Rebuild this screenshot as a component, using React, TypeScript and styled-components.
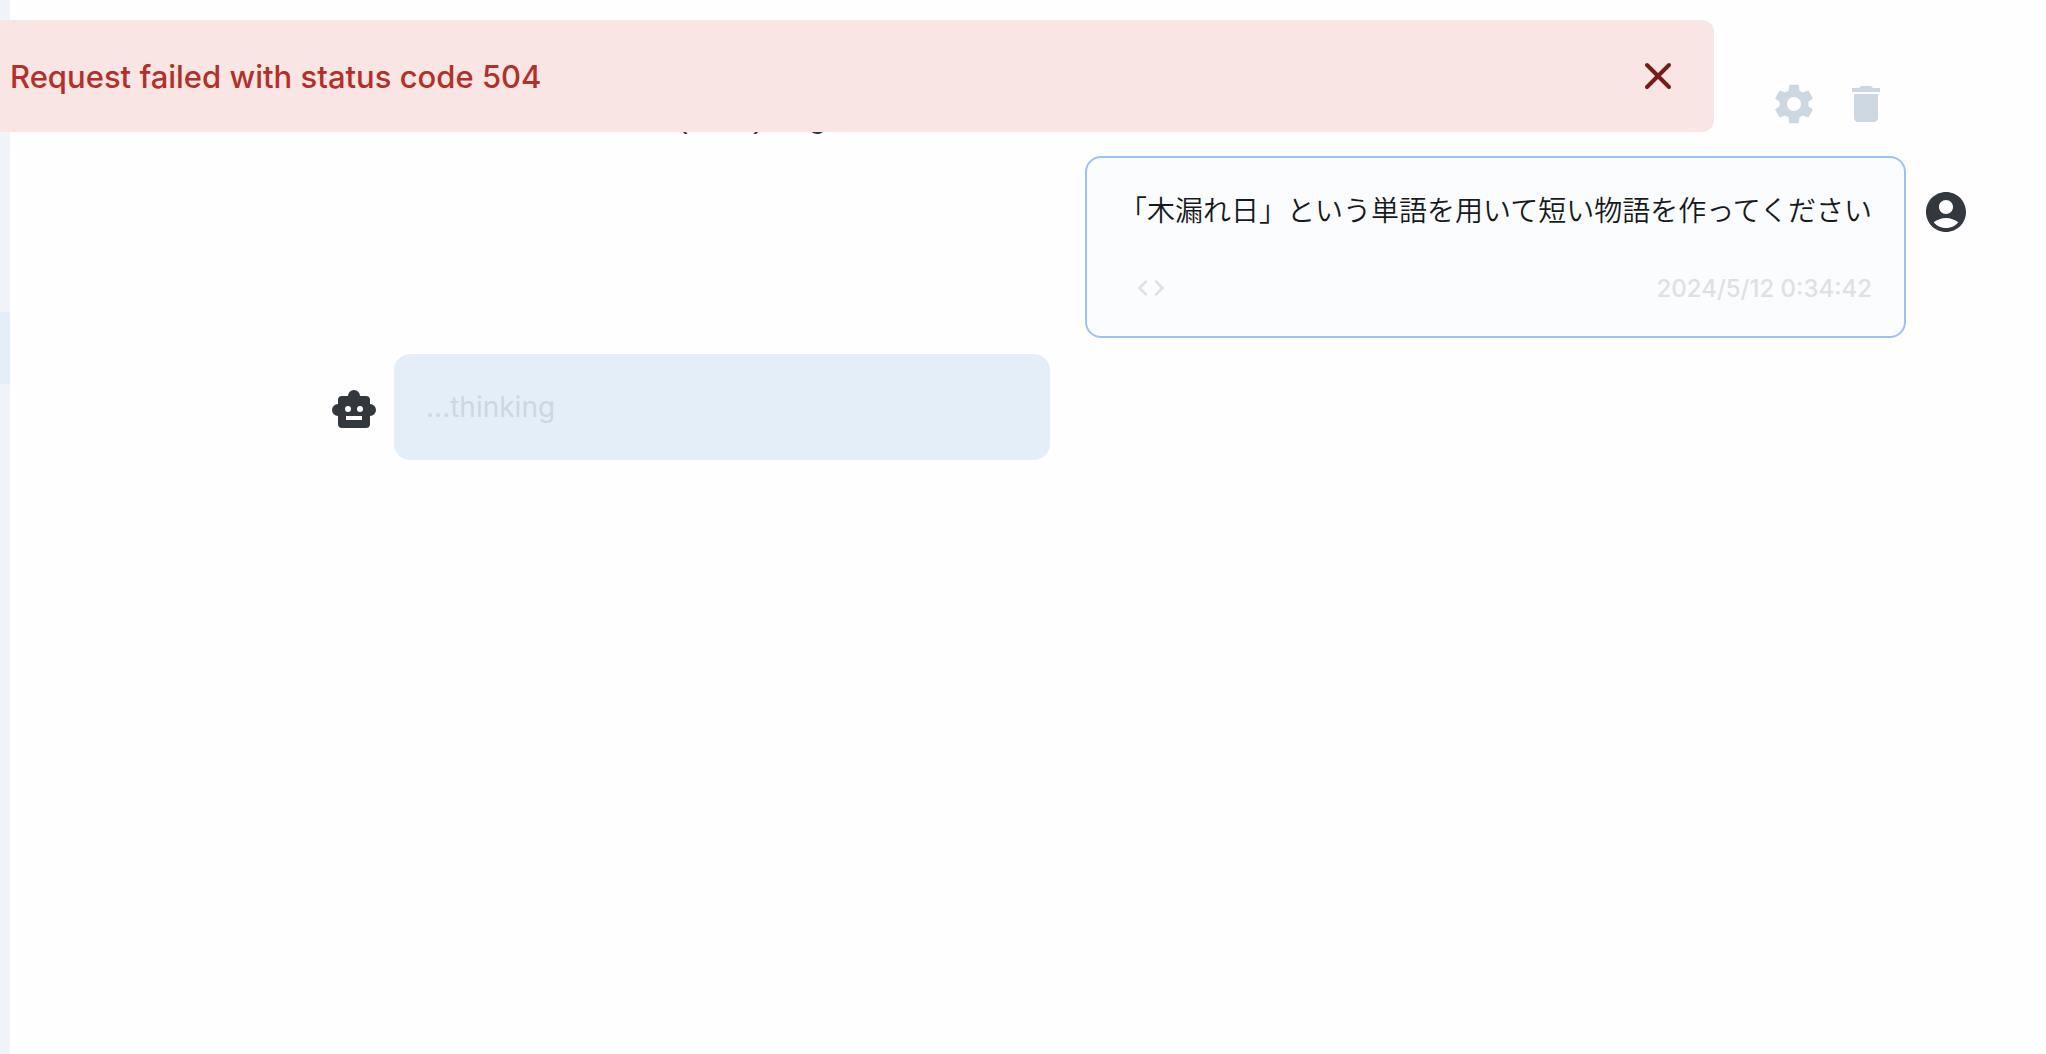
import React from "react";
import styled, { createGlobalStyle } from "styled-components";

const GlobalStyle = createGlobalStyle`
  * { box-sizing: border-box; }
  body {
    margin: 0;
    background: #fefefe;
    color: #1b1c1e;
    font-family: Inter, "Noto Sans CJK JP", sans-serif;
  }
`;

const Page = styled.div`
  display: flex;
  min-height: 100vh;
`;

const Sidebar = styled.nav`
  width: 10px;
  flex-shrink: 0;
  padding-top: 312px;
  background: #f0f4f8;
`;

const ActiveItem = styled.a`
  display: block;
  height: 72px;
  background: #e4eef9;
`;

const Main = styled.main`
  flex: 1;
  min-width: 0;
  display: flex;
  flex-direction: column;
  padding: 80px 76px 0 320px;
`;

const Header = styled.header`
  display: flex;
  align-items: center;
  justify-content: space-between;
  height: 48px;
  padding-right: 80px;
`;

const Title = styled.h1`
  margin: 0;
  padding: 24px 0 0 290px;
  font-family: "Liberation Sans", sans-serif;
  font-size: 32px;
  line-height: 48px;
  font-weight: 400;
  color: #32383e;
`;

const Tools = styled.div`
  display: flex;
  gap: 24px;
`;

const IconButton = styled.button<{ $color: string }>`
  display: flex;
  padding: 0;
  border: 0;
  background: none;
  color: ${(p) => p.$color};
  cursor: pointer;
`;

const Messages = styled.section`
  display: flex;
  flex-direction: column;
  gap: 16px;
  padding-top: 28px;
`;

const Row = styled.article<{ $own?: boolean }>`
  display: flex;
  gap: 16px;
  justify-content: ${(p) => (p.$own ? "flex-end" : "flex-start")};
`;

const Avatar = styled.div`
  display: flex;
  height: 48px;
  margin-top: 32px;
  color: #32383e;
`;

const UserBubble = styled.div`
  padding: 32px 32px 24px;
  border: 2px solid #9fc1ef;
  border-radius: 16px;
  background: #fbfcfe;
`;

const BotBubble = styled.div`
  width: 656px;
  padding: 32px;
  border-radius: 16px;
  background: #e4eef9;
`;

const MessageText = styled.p<{ $muted?: boolean }>`
  margin: 0;
  font-size: 28px;
  line-height: 42px;
  font-weight: ${(p) => (p.$muted ? 400 : 350)};
  color: ${(p) => (p.$muted ? "#cdd7e1" : "#171a1c")};
`;

const Meta = styled.footer`
  display: flex;
  align-items: center;
  justify-content: space-between;
  height: 48px;
  margin-top: 32px;
  padding-left: 16px;
`;

const Time = styled.time`
  padding-top: 2px;
  font-size: 24px;
  line-height: 36px;
  font-weight: 500;
  color: #dfe0e2;
`;

const Alert = styled.div`
  position: fixed;
  top: 20px;
  left: 0;
  right: 332px;
  display: flex;
  align-items: center;
  justify-content: space-between;
  height: 112px;
  padding: 0 32px 0 10px;
  border-radius: 0 12px 12px 0;
  background: #f9e5e3;
  color: #b3302a;
  font-size: 31px;
  line-height: 48px;
  font-weight: 500;
`;

const AlertText = styled.span`
  padding-top: 2px;
`;

const Icon = ({ d, size = 48 }: { d: string; size?: number }) => (
  <svg width={size} height={size} viewBox="0 0 24 24" fill="currentColor" fillRule="evenodd" aria-hidden="true">
    <path d={d} />
  </svg>
);

const GEAR =
  "M19.14 12.94c.04-.3.06-.61.06-.94 0-.32-.02-.64-.07-.94l2.03-1.58c.18-.14.23-.41.12-.61l-1.92-3.32c-.12-.22-.37-.29-.59-.22l-2.39.96c-.5-.38-1.03-.7-1.62-.94l-.36-2.54c-.04-.24-.24-.41-.48-.41h-3.84c-.24 0-.43.17-.47.41l-.36 2.54c-.59.24-1.13.57-1.62.94l-2.39-.96c-.22-.08-.47 0-.59.22L2.74 8.87c-.12.21-.08.47.12.61l2.03 1.58c-.05.3-.09.63-.09.94s.02.64.07.94l-2.03 1.58c-.18.14-.23.41-.12.61l1.92 3.32c.12.22.37.29.59.22l2.39-.96c.5.38 1.03.7 1.62.94l.36 2.54c.05.24.24.41.48.41h3.84c.24 0 .44-.17.47-.41l.36-2.54c.59-.24 1.13-.56 1.62-.94l2.39.96c.22.08.47 0 .59-.22l1.92-3.32c.12-.22.07-.47-.12-.61l-2.01-1.58zM12 15.5c-1.93 0-3.5-1.57-3.5-3.5s1.57-3.5 3.5-3.5 3.5 1.57 3.5 3.5-1.57 3.5-3.5 3.5z";
const TRASH =
  "M6 19c0 1.1.9 2 2 2h8c1.1 0 2-.9 2-2V7H6v12zM19 4h-3.5l-.71-.71c-.18-.18-.44-.29-.7-.29H9.91c-.26 0-.52.11-.7.29L8.500 4H5v2h14V4z";
const USER =
  "M12 2C6.48 2 2 6.48 2 12s4.48 10 10 10 10-4.48 10-10S17.52 2 12 2zm0 4c1.93 0 3.5 1.57 3.5 3.5S13.930 13 12 13s-3.500-1.570-3.500-3.500S10.070 6 12 6zm0 14c-2.030 0-4.430-.820-6.140-2.880C7.550 15.800 9.680 15 12 15s4.450.800 6.140 2.120C16.430 19.180 14.030 20 12 20z";
const BOT =
  "M20 9a3 3 0 0 1 0 6v4a2 2 0 0 1-2 2H6a2 2 0 0 1-2-2v-4a3 3 0 0 1 0-6V7a2 2 0 0 1 2-2h3a3 3 0 0 1 6 0h3a2 2 0 0 1 2 2zM9 10a1.500 1.500 0 1 0 0 3 1.500 1.500 0 0 0 0-3zM15 10a1.500 1.500 0 1 0 0 3 1.500 1.500 0 0 0 0-3zM8 15v2h8v-2z";
const CODE =
  "M9.400 16.600 4.800 12l4.600-4.600L8 6l-6 6 6 6zm5.200 0 4.600-4.600-4.600-4.600L16 6l6 6-6 6z";

export default function App() {
  return (
    <Page>
      <GlobalStyle />
      <Sidebar aria-label="Chats">
        <ActiveItem href="#chat" aria-label="Current chat" />
      </Sidebar>
      <Main>
        <Header>
          <Title>Bot (GPT) Log</Title>
          <Tools>
            <IconButton $color="#cdd7e1" aria-label="Settings">
              <Icon d={GEAR} />
            </IconButton>
            <IconButton $color="#cdd7e1" aria-label="Delete">
              <Icon d={TRASH} />
            </IconButton>
          </Tools>
        </Header>
        <Messages>
          <Row $own>
            <UserBubble>
              <MessageText lang="ja">「木漏れ日」という単語を用いて短い物語を作ってください</MessageText>
              <Meta>
                <IconButton $color="#dfe0e2" aria-label="Show source">
                  <Icon d={CODE} size={32} />
                </IconButton>
                <Time>2024/5/12 0:34:42</Time>
              </Meta>
            </UserBubble>
            <Avatar>
              <Icon d={USER} />
            </Avatar>
          </Row>
          <Row>
            <Avatar>
              <Icon d={BOT} />
            </Avatar>
            <BotBubble>
              <MessageText $muted>...thinking</MessageText>
            </BotBubble>
          </Row>
        </Messages>
      </Main>
      <Alert role="alert">
        <AlertText>Request failed with status code 504</AlertText>
        <IconButton $color="#751b18" aria-label="Close">
          <svg width="48" height="48" viewBox="0 0 24 24" fill="none" stroke="currentColor" strokeWidth="2" strokeLinecap="round" aria-hidden="true">
            <path d="M6.500 6.500l11 11M17.500 6.500l-11 11" />
          </svg>
        </IconButton>
      </Alert>
    </Page>
  );
}
